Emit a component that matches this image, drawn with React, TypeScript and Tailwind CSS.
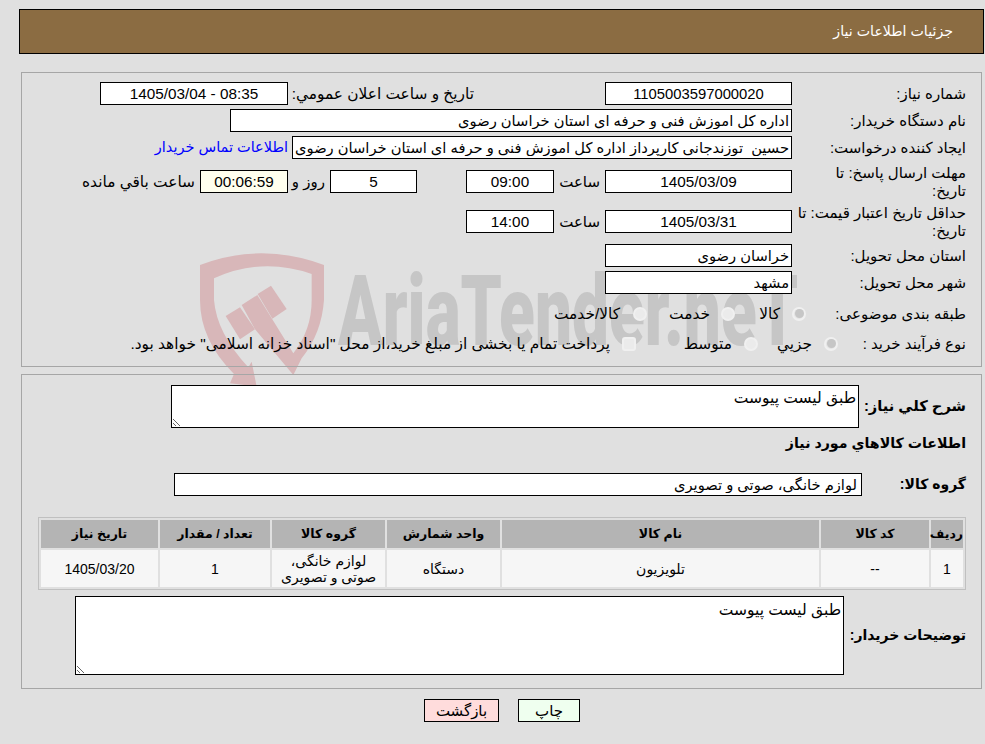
const font = "font-['Liberation_Sans','DejaVu_Sans',sans-serif]";

const items = [
  { row: '1', code: '--', name: 'تلویزیون', unit: 'دستگاه', group: 'لوازم خانگی، صوتی و تصویری', qty: '1', date: '1405/03/20' },
];

function Field({ value, w, center = true, bg = 'bg-white' }: { value: string; w: string; center?: boolean; bg?: string }) {
  return (
    <input
      readOnly
      value={value}
      className={`h-[23px] shrink-0 border border-black px-[2px] text-black outline-none ${w} ${bg} ${center ? 'text-center text-[15.3px]' : 'text-right text-[14.7px]'}`}
    />
  );
}

function Dot({ checked = false, square = false }: { checked?: boolean; square?: boolean }) {
  return (
    <span
      className={`flex h-[14px] w-[14px] shrink-0 items-center justify-center border-2 border-[#f0f0f0] ${checked ? 'bg-[#e4e4e4]' : 'bg-[#ebebeb]'} ${square ? 'rounded-[3px]' : 'rounded-full'}`}
    >
      {checked && <span className="h-[9px] w-[9px] rounded-full bg-[#c6c6c6]" />}
    </span>
  );
}

function Label({ children, w = 'w-[174px]' }: { children: React.ReactNode; w?: string }) {
  return <div className={`shrink-0 pt-[1px] text-[15px] leading-[18px] ${w}`}>{children}</div>;
}

function Watermark() {
  return (
    <div className="pointer-events-none absolute left-0 top-0 z-0 h-[400px] w-[985px] overflow-hidden" aria-hidden>
      <svg className="absolute left-[190px] top-[250px]" width="150" height="145" viewBox="0 0 450 435" fill="#d8b7b9">
        <path d="M30 45 Q215 -25 402 45 L402 150 Q395 250 335 325 L310 375 L195 238 L155 165 L202 135 L245 205 L310 310 Q365 240 365 150 L365 72 Q215 20 72 85 L72 150 Q80 250 175 352 L185 335 L200 410 L120 400 L132 372 Q30 270 30 150 Z" />
        <path d="M107 198 L150 172 L195 238 L150 268 Z" />
        <path d="M203 132 L243 107 L290 177 L247 206 Z" />
      </svg>
      <div className="absolute left-[338px] top-[252px] origin-left scale-x-[0.67] whitespace-nowrap font-['Roboto',sans-serif] text-[98px] font-black leading-[120px] text-[#c6c6c6]">
        AriaTender.neT
      </div>
    </div>
  );
}

export default function App() {
  return (
    <div dir="rtl" className={`relative min-h-[744px] overflow-hidden bg-[#e0e0e0] pt-[9px] text-black ${font}`}>
      <Watermark />
      <div className="relative z-10">
        <div className="ml-[19px] mr-[1px] flex h-[45px] items-center border border-black bg-[#8b6c42] pr-[30px] text-[14.2px] text-white">
          جزئیات اطلاعات نیاز
        </div>

        <div className="ml-[21px] mr-[3px] mt-[18px] flex h-[295px] flex-col border border-[#a6a6a6] pr-[15px] pt-[9px]">
          <div className="flex h-[23px] items-center">
            <Label>شماره نیاز:</Label>
            <Field value="1105003597000020" w="w-[187px] !text-[14.8px]" />
            <div className="w-[317px] shrink-0 pr-[131px] pt-[1px] text-[15.4px]">تاریخ و ساعت اعلان عمومي:</div>
            <Field value="08:35 - 1405/03/04" w="w-[188px]" />
          </div>
          <div className="mt-[4px] flex h-[23px] items-center">
            <Label>نام دستگاه خریدار:</Label>
            <Field value="اداره کل اموزش فنی و حرفه ای استان خراسان رضوی" w="w-[562px]" center={false} />
          </div>
          <div className="mt-[4px] flex h-[23px] items-center">
            <Label>ایجاد کننده درخواست:</Label>
            <Field value="حسین  توزندجانی کارپرداز اداره کل اموزش فنی و حرفه ای استان خراسان رضوی" w="w-[500px]" center={false} />
            <a className="mr-[4px] cursor-pointer whitespace-nowrap pt-[1px] text-[14.5px] text-[#0000ff]">اطلاعات تماس خریدار</a>
          </div>
          <div className="mt-[11px] flex h-[23px] items-center">
            <Label w="w-[174px] pl-[12px]">مهلت ارسال پاسخ: تا تاریخ:</Label>
            <Field value="1405/03/09" w="w-[187px]" />
            <div className="w-[51px] shrink-0 pr-[5px] pt-[1px] text-[15px]">ساعت</div>
            <Field value="09:00" w="w-[88px]" />
            <div className="w-[49px] shrink-0" />
            <Field value="5" w="w-[87px]" />
            <div className="w-[42px] shrink-0 pr-[5px] pt-[1px] text-[15px]">روز و</div>
            <Field value="00:06:59" w="w-[88px]" bg="bg-[#ffffee]" />
            <div className="shrink-0 pr-[5px] pt-[1px] text-[15.4px]">ساعت باقي مانده</div>
          </div>
          <div className="mt-[17px] flex h-[23px] items-center">
            <Label>حداقل تاریخ اعتبار قیمت: تا تاریخ:</Label>
            <Field value="1405/03/31" w="w-[187px]" />
            <div className="w-[51px] shrink-0 pr-[5px] pt-[1px] text-[15px]">ساعت</div>
            <Field value="14:00" w="w-[88px]" />
          </div>
          <div className="mt-[11px] flex h-[23px] items-center">
            <Label>استان محل تحویل:</Label>
            <Field value="خراسان رضوی" w="w-[187px]" center={false} />
          </div>
          <div className="mt-[4px] flex h-[23px] items-center">
            <Label>شهر محل تحویل:</Label>
            <Field value="مشهد" w="w-[187px]" center={false} />
          </div>
          <div className="mt-[8px] flex h-[23px] items-center text-[15.4px]">
            <Label w="w-[160px]">طبقه بندی موضوعی:</Label>
            <div className="flex w-[71px] shrink-0 items-center gap-[12px]"><Dot checked />کالا</div>
            <div className="flex w-[88px] shrink-0 items-center gap-[11px]"><Dot />خدمت</div>
            <div className="flex items-center gap-[13px]"><Dot />کالا/خدمت</div>
          </div>
          <div className="mt-[7px] flex h-[23px] items-center text-[15.4px]">
            <Label w="w-[128px]">نوع فرآیند خرید :</Label>
            <div className="flex w-[80px] shrink-0 items-center gap-[12px]"><Dot checked />جزيي</div>
            <div className="flex w-[122px] shrink-0 items-center gap-[12px]"><Dot />متوسط</div>
            <div className="flex items-center gap-[12px] whitespace-nowrap"><Dot square />پرداخت تمام یا بخشی از مبلغ خرید،از محل "اسناد خزانه اسلامی" خواهد بود.</div>
          </div>
        </div>

        <div className="ml-[21px] mr-[3px] mt-[7px] h-[315px] border border-[#a6a6a6] pr-[15px] pt-[10px]">
          <div className="flex items-center">
            <div className="w-[107px] shrink-0 whitespace-nowrap text-[14.7px] font-bold">شرح كلي نياز:</div>
            <textarea readOnly defaultValue="طبق لیست پیوست" className="block h-[43px] w-[688px] border border-black bg-white px-[2px] pt-[3px] text-[15.5px] leading-[18px] outline-none" />
          </div>
          <div className="mt-[5px] h-[20px] text-[14.2px] font-bold leading-[20px]">اطلاعات كالاهاي مورد نياز</div>
          <div className="mt-[20px] flex items-center">
            <div className="w-[104px] shrink-0 whitespace-nowrap text-[14px] font-bold">گروه كالا:</div>
            <Field value="لوازم خانگی، صوتی و تصویری" w="w-[688px] !pr-[4px]" center={false} />
          </div>
          <table className="mt-[21px] w-[928px] table-fixed border-separate border-spacing-[2px] border border-[#c0c0c0] text-center text-[14px]">
            <colgroup>
              <col className="w-[32px]" />
              <col className="w-[108px]" />
              <col className="w-[317px]" />
              <col className="w-[113px]" />
              <col className="w-[113px]" />
              <col className="w-[110px]" />
              <col className="w-[117px]" />
            </colgroup>
            <thead>
              <tr className="h-[28px] bg-[#b4b4b4] text-[12.5px] font-bold">
                <th>ردیف</th>
                <th>کد کالا</th>
                <th>نام کالا</th>
                <th>واحد شمارش</th>
                <th>گروه کالا</th>
                <th>تعداد / مقدار</th>
                <th>تاریخ نیاز</th>
              </tr>
            </thead>
            <tbody>
              {items.map((it) => (
                <tr key={it.row} className="h-[37px] bg-[#f6f6f6] leading-[16px]">
                  <td>{it.row}</td>
                  <td>{it.code}</td>
                  <td>{it.name}</td>
                  <td>{it.unit}</td>
                  <td>{it.group}</td>
                  <td>{it.qty}</td>
                  <td>{it.date}</td>
                </tr>
              ))}
            </tbody>
          </table>
          <div className="mt-[6px] flex items-center">
            <div className="w-[122px] shrink-0 whitespace-nowrap text-[14px] font-bold">توضیحات خریدار:</div>
            <textarea readOnly defaultValue="طبق لیست پیوست" className="block h-[79px] w-[769px] border border-black bg-white px-[2px] pt-[4px] text-[15.5px] leading-[18px] outline-none" />
          </div>
        </div>

        <div className="mt-[10px] flex justify-center gap-[19px] pl-[19px]">
          <button className="h-[23px] w-[62px] border border-black bg-[#efffef] text-[15px]">چاپ</button>
          <button className="h-[23px] w-[75px] border border-black bg-[#ffdcdc] text-[15px]">بازگشت</button>
        </div>
      </div>
    </div>
  );
}
